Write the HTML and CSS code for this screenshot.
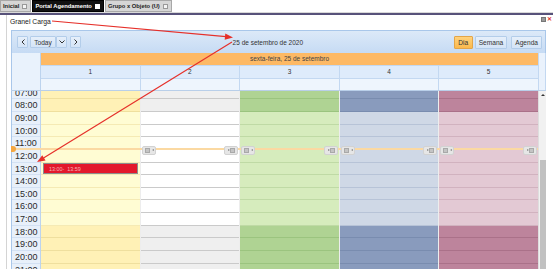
FILE: index.html
```html
<!DOCTYPE html>
<html>
<head>
  <title>Portal Agendamento</title>
  <meta charset="utf-8">
  <link rel="stylesheet" href="styles.css">
</head>
<body>
<div class="tabs">
  <div class="tab">Inicial <span class="tab-x"></span></div>
  <div class="tab tab-active">Portal Agendamento <span class="tab-x"></span></div>
  <div class="tab">Grupo x Objeto (U) <span class="tab-x"></span></div>
</div>

<div class="panel">
  <div class="panel-head">
    <div class="panel-title">Granel Carga</div>
    <div class="panel-tools">
      <span class="tool-min"></span>
      <span class="tool-close">&#x2715;</span>
    </div>
  </div>

  <div class="calendar">
    <div class="toolbar">
      <div class="nav">
        <button class="btn btn-icon">
          <svg width="4" height="6" viewBox="0 0 4 6"><polyline points="3.5,0.5 1,3 3.5,5.5" fill="none" stroke="#333" stroke-width="1"/></svg>
        </button>
        <button class="btn btn-today">Today</button>
        <button class="btn btn-icon btn-joined">
          <svg width="6" height="4" viewBox="0 0 6 4"><polyline points="0.5,0.5 3,3 5.5,0.5" fill="none" stroke="#333" stroke-width="1"/></svg>
        </button>
        <button class="btn btn-icon btn-next">
          <svg width="4" height="6" viewBox="0 0 4 6"><polyline points="0.5,0.5 3,3 0.5,5.5" fill="none" stroke="#333" stroke-width="1"/></svg>
        </button>
      </div>
      <div class="toolbar-title">25 de setembro de 2020</div>
      <div class="views">
        <button class="btn btn-on">Dia</button>
        <button class="btn">Semana</button>
        <button class="btn btn-agenda">Agenda</button>
      </div>
    </div>

    <div class="head">
      <div class="head-corner"></div>
      <div class="head-main">
        <div class="head-date">sexta-feira, 25 de setembro</div>
        <div class="head-cols">
          <div>1</div><div>2</div><div>3</div><div>4</div><div>5</div>
        </div>
        <div class="head-cols head-blank">
          <div></div><div></div><div></div><div></div><div></div>
        </div>
      </div>
      <div class="head-scroll"></div>
    </div>

    <div class="body">
      <div class="rows">
        <div class="times">
          <div class="slot">07:00</div>
          <div class="slot">08:00</div>
          <div class="slot">09:00</div>
          <div class="slot">10:00</div>
          <div class="slot">11:00</div>
          <div class="slot">12:00</div>
          <div class="slot">13:00</div>
          <div class="slot">14:00</div>
          <div class="slot">15:00</div>
          <div class="slot">16:00</div>
          <div class="slot">17:00</div>
          <div class="slot">18:00</div>
          <div class="slot">19:00</div>
          <div class="slot">20:00</div>
          <div class="slot">21:00</div>
        </div>
        <div class="day day-1"></div>
        <div class="day day-2"><span class="handle handle-l"></span><span class="handle handle-r"></span></div>
        <div class="day day-3"><span class="handle handle-l"></span><span class="handle handle-r"></span></div>
        <div class="day day-4"><span class="handle handle-l"></span><span class="handle handle-r"></span></div>
        <div class="day day-5"><span class="handle handle-l"></span><span class="handle handle-r"></span></div>
      </div>
      <div class="scrollbar">
        <span class="scroll-up"></span>
        <span class="scroll-thumb"></span>
      </div>
      <div class="now-line"></div>
      <div class="now-marker"></div>
    </div>
  </div>
</div>

<svg class="arrows" width="553" height="269" viewBox="0 0 553 269">
  <line x1="52" y1="21" x2="226" y2="36.6" stroke="#e6302a" stroke-width="1.2"/>
  <polygon points="233,37.4 225.3,33.6 224.7,39.8" fill="#e6302a"/>
  <line x1="232" y1="42" x2="43.5" y2="158" stroke="#e6302a" stroke-width="1.2"/>
  <polygon points="37,162 45.6,160.6 42.3,155.2" fill="#e6302a"/>
</svg>

<script>
  // monta as linhas de horario em cada coluna
  var days = document.querySelectorAll('.day');
  for (var d = 0; d < days.length; d++) {
    for (var h = 7; h <= 21; h++) {
      var slot = document.createElement('div');
      slot.className = 'slot';
      if (h < 9 || h > 17) {
        slot.className += ' off';
      }
      if (d === 0 && h === 13) {
        var ev = document.createElement('div');
        ev.className = 'event';
        ev.innerText = '13:00-  13:59';
        slot.appendChild(ev);
      }
      days[d].appendChild(slot);
    }
  }
</script>
</body>
</html>
```

FILE: styles.css
```css
body {
  margin: 0;
  width: 553px;
  height: 269px;
  overflow: hidden;
  font-family: "Liberation Sans", Arial, sans-serif;
  background: #ffffff;
  position: relative;
}

/* abas */
.tabs {
  display: flex;
  height: 13px;
  border-bottom: 2px solid #57527a;
  background: #ffffff;
  box-shadow: inset 0 -1px 0 #d8d8d8;
}

.tab {
  display: flex;
  align-items: center;
  gap: 3px;
  height: 12px;
  padding: 0 3px 0 2px;
  margin-right: 1px;
  background: #d6d6d6;
  border: 1px solid #a8a8a8;
  box-sizing: border-box;
  font-size: 5.8px;
  font-weight: bold;
  color: #222;
}

.tab-active {
  background: #111111;
  color: #ffffff;
  border-color: #000;
}

.tab-x {
  width: 5px;
  height: 5px;
  background: #f4f4f4;
  border: 1px solid #999;
  box-sizing: border-box;
}

.tab-active .tab-x {
  background: #ffffff;
  border-color: #fff;
}

/* painel */
.panel {
  margin-left: 6px;
  border-left: 1px solid #d4d4d4;
  padding-left: 4px;
  height: 254px;
}

.panel-head {
  display: flex;
  justify-content: space-between;
  height: 13px;
}

.panel-title {
  margin-left: -1px;
  padding-top: 3px;
  font-size: 6.8px;
  color: #222;
}

.panel-tools {
  display: flex;
  gap: 1px;
  padding-top: 1px;
  margin-right: 1px;
}

.tool-min {
  width: 5px;
  height: 5px;
  margin-top: 1px;
  background: #9a9a9a;
  border: 1px solid #777;
  box-sizing: border-box;
}

.tool-close {
  font-size: 6px;
  font-weight: bold;
  color: #e0332a;
  line-height: 7px;
}

/* calendario */
.calendar {
  width: 535px;
  margin-top: 2px;
}

.toolbar {
  display: flex;
  align-items: center;
  height: 23px;
  box-sizing: border-box;
  padding: 0 3px 0 5px;
  background: linear-gradient(#dce9f8, #c6dbf4);
  border: 1px solid #a9c7ea;
  border-bottom: none;
}

.nav,
.views {
  display: flex;
  align-items: center;
}

.btn {
  display: flex;
  align-items: center;
  justify-content: center;
  height: 12px;
  padding: 0 3px;
  margin: 0 1px 0 0;
  background: linear-gradient(#e6effa, #d4e4f7);
  border: 1px solid #b3cdea;
  border-radius: 1px;
  font-family: "Liberation Sans", Arial, sans-serif;
  font-size: 6.6px;
  color: #333;
  box-sizing: border-box;
}

.btn-icon {
  width: 11px;
  padding: 0;
}

.btn-today {
  width: 26px;
  margin-left: 1px;
  margin-right: 0;
}

.btn-next {
  margin-left: 2px;
}

.btn-on {
  width: 19px;
  background: linear-gradient(#ffd27c, #fbb94c);
  border-color: #e3a548;
  margin-right: 2px;
}

.views .btn {
  height: 13px;
}

.btn-agenda {
  margin-left: 3px;
  margin-right: 0;
}

.toolbar-title {
  flex: 1;
  text-align: center;
  font-size: 6.5px;
  color: #333;
}

/* cabecalho */
.head {
  display: flex;
  height: 37px;
}

.head-corner {
  width: 30px;
  background: #e9f2fc;
  border-left: 1px solid #a9c7ea;
  border-right: 1px solid #bcd3ee;
  box-sizing: border-box;
}

.head-main {
  flex: 1;
  display: flex;
  flex-direction: column;
}

.head-date {
  height: 12px;
  line-height: 12px;
  background: #fdb965;
  text-align: center;
  font-size: 6.5px;
  color: #444;
}

.head-cols {
  display: flex;
  height: 13px;
  background: #deebfb;
  border-top: 1px solid #c3d8f1;
  box-sizing: border-box;
}

.head-cols div {
  flex: 1;
  border-left: 1px solid #c3d8f1;
  text-align: center;
  line-height: 11px;
  font-size: 6.5px;
  color: #333;
}

.head-cols div:first-child {
  border-left: none;
}

.head-blank {
  height: 12px;
  background: #eef5fd;
}

.head-scroll {
  width: 8px;
  background: #eaf2fc;
  border-left: 1px solid #c3d8f1;
  border-right: 1px solid #c3d8f1;
  box-sizing: border-box;
}

/* corpo */
.body {
  position: relative;
  display: flex;
  height: 181px;
  overflow: hidden;
  border-top: 1px solid #b9cfe9;
  box-sizing: border-box;
}

.rows {
  flex: 1;
  display: flex;
  margin-top: -4.35px;
}

.slot {
  position: relative;
  height: 12.65px;
  box-sizing: border-box;
  border-bottom: 1px solid var(--line);
  background: var(--bg);
}

.slot.off {
  background: var(--off);
  border-bottom-color: var(--off-line);
}

.times {
  width: 30px;
  --bg: #e8f0fa;
  --line: #d3e1f3;
  background: #e8f0fa;
  border-left: 1px solid #a9c7ea;
  border-right: 1px solid #bcd3ee;
  box-sizing: border-box;
}

.times .slot {
  padding-left: 3px;
  font-size: 9px;
  line-height: 12.65px;
  color: #2a2a2a;
}

.day {
  position: relative;
  flex: 1;
  border-left: 1px solid rgba(0, 0, 0, 0.07);
}

.day-1 {
  border-left: none;
  --bg: #fffcd3;
  --off: #fff1b6;
  --line: #f5eab4;
  --off-line: #efdf9e;
}

.day-2 {
  --bg: #ffffff;
  --off: #efefef;
  --line: #cacaca;
  --off-line: #cacaca;
}

.day-3 {
  --bg: #d6ecbd;
  --off: #afd393;
  --line: #bfdaa5;
  --off-line: #9bc47f;
}

.day-4 {
  --bg: #cfd8e6;
  --off: #899bbd;
  --line: #b7c3d7;
  --off-line: #798caf;
}

.day-5 {
  --bg: #e3c9d4;
  --off: #bd849c;
  --line: #d1b2bf;
  --off-line: #aa7189;
}

.event {
  position: absolute;
  top: 0;
  left: 2px;
  right: 2px;
  bottom: 0;
  background: #e3182c;
  border: 1px solid #8d8d8d;
  padding-left: 5px;
  font-size: 5.4px;
  line-height: 10px;
  color: #f6b3b8;
  white-space: pre;
}

.scrollbar {
  position: relative;
  width: 8px;
  background: #f1f1f1;
  border-left: 1px solid #dedede;
  box-sizing: border-box;
}

.scroll-up {
  position: absolute;
  top: 3px;
  left: 2px;
  border-left: 2px solid transparent;
  border-right: 2px solid transparent;
  border-bottom: 2px solid #333;
}

.scroll-thumb {
  position: absolute;
  top: 69px;
  left: 1px;
  right: 0;
  bottom: 0;
  background: #c1c1c1;
}

/* linha de hora atual */
.now-line {
  position: absolute;
  top: 57px;
  left: 0;
  right: 8px;
  height: 2px;
  background: #fbd9a2;
}

.now-marker {
  position: absolute;
  top: 55px;
  left: 0;
  width: 5px;
  height: 6px;
  border-radius: 0 3px 3px 0;
  background: #f4a640;
}

.handle {
  position: absolute;
  top: 59.35px;
  width: 14px;
  height: 9px;
  z-index: 2;
  background: #e6e6e6;
  border: 1px solid #d2d2d2;
  border-radius: 2px;
  box-sizing: border-box;
}

.handle-l {
  left: 1px;
}

.handle-r {
  right: 1px;
}

.handle::before {
  content: "";
  position: absolute;
  top: 1px;
  width: 5px;
  height: 5px;
  background: #c4c4c4;
  border: 1px solid #a9a9a9;
  box-sizing: border-box;
}

.handle::after {
  content: "";
  position: absolute;
  top: 2px;
  border-top: 1.5px solid transparent;
  border-bottom: 1.5px solid transparent;
}

.handle-l::before {
  left: 2px;
}

.handle-l::after {
  left: 9px;
  border-right: 2px solid #888;
}

.handle-r::before {
  right: 2px;
}

.handle-r::after {
  left: 3px;
  border-left: 2px solid #888;
}

.arrows {
  position: absolute;
  top: 0;
  left: 0;
  pointer-events: none;
  z-index: 5;
}
```
